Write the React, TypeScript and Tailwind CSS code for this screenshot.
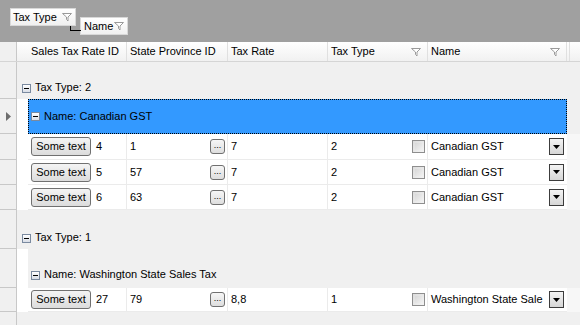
import React from "react";

const font = { fontFamily: '"Liberation Sans", Arial, sans-serif' };

function Funnel() {
  return (
    <svg width="10" height="10" viewBox="0 0 10 10" className="shrink-0">
      <path d="M0.5 1.5 H9.5 L6 5 V9 L4.5 7.5 V5 Z" fill="#fff" stroke="#9a9a9a" strokeWidth="1" />
    </svg>
  );
}

function Minus() {
  return (
    <span className="w-[9px] h-[9px] border border-[#7a8aa0] bg-gradient-to-b from-white to-[#d8dde6] flex items-center justify-center shrink-0">
      <span className="w-[5px] h-px bg-[#000]" />
    </span>
  );
}

function RowHead({ h, arrow }: { h: string; arrow?: boolean }) {
  return (
    <div className={`w-[17px] ${h} shrink-0 bg-[#f0f0f0] border-r border-b border-[#c8c8c8] flex items-center justify-center`}>
      {arrow && (
        <svg width="5" height="9" viewBox="0 0 5 9">
          <path d="M0 0 L5 4.5 L0 9 Z" fill="#6d6d6d" />
        </svg>
      )}
    </div>
  );
}

type DataRow = { id: string; prov: string; rate: string; type: string; name: string };

function SomeButton() {
  return (
    <span className="w-[60px] h-[19px] rounded-[3px] border border-[#707070] bg-gradient-to-b from-[#f4f4f4] to-[#dcdcdc] flex items-center justify-center text-[11px] text-black shrink-0">
      Some text
    </span>
  );
}

function Data({ r, h }: { r: DataRow; h: string }) {
  const cell = "h-full border-r border-[#ebebeb] flex items-center shrink-0";
  return (
    <div className={`flex ${h}`}>
      <RowHead h="h-full" />
      <div className="w-[11px] h-full bg-white shrink-0" />
      <div className="flex w-[539px] bg-white border-b border-[#ebebeb]">
        <div className={`${cell} w-[99px] pl-[3px]`}>
          <SomeButton />
          <span className="ml-[5px]">{r.id}</span>
        </div>
        <div className={`${cell} w-[101px] pl-[3px] justify-between pr-[2px]`}>
          <span>{r.prov}</span>
          <span className="w-[15px] h-[15px] rounded-[3px] border border-[#707070] bg-gradient-to-b from-[#f6f6f6] to-[#dedede] flex items-end justify-center pb-[3px] text-[9px] leading-none">
            ...
          </span>
        </div>
        <div className={`${cell} w-[100px] pl-[3px]`}>{r.rate}</div>
        <div className={`${cell} w-[100px] pl-[3px] justify-between pr-[2px]`}>
          <span>{r.type}</span>
          <span className="w-[13px] h-[13px] border border-[#8e8e8e] bg-gradient-to-br from-[#dcdcdc] to-[#f4f4f4] p-[2px]">
            <span className="block w-full h-full bg-gradient-to-br from-[#d8d8d8] to-[#f0f0f0]" />
          </span>
        </div>
        <div className={`${cell} w-[139px] pl-[3px] justify-between pr-[3px] border-r-0`}>
          <span className="whitespace-nowrap">{r.name}</span>
          <span className="w-[15px] h-[17px] border border-[#3c3c3c] bg-gradient-to-b from-[#f4f4f4] to-[#d6d6d6] flex items-center justify-center shrink-0">
            <svg width="7" height="4" viewBox="0 0 7 4">
              <path d="M0 0 H7 L3.5 4 Z" fill="#000" />
            </svg>
          </span>
        </div>
      </div>
      <div className="flex-1 h-full bg-[#f7f7f7]" />
    </div>
  );
}

const canadian: DataRow[] = [
  { id: "4", prov: "1", rate: "7", type: "2", name: "Canadian GST" },
  { id: "5", prov: "57", rate: "7", type: "2", name: "Canadian GST" },
  { id: "6", prov: "63", rate: "7", type: "2", name: "Canadian GST" },
];

export default function App() {
  const headers = [
    { t: "Sales Tax Rate ID", w: "w-[99px]" },
    { t: "State Province ID", w: "w-[101px]" },
    { t: "Tax Rate", w: "w-[100px]" },
    { t: "Tax Type", w: "w-[100px]", f: true },
    { t: "Name", w: "w-[139px]", f: true },
  ];

  return (
    <div className="w-[580px] h-[325px] overflow-hidden bg-[#f0f0f0] text-[11px] text-black" style={font}>
      {/* group panel */}
      <div className="h-[42px] bg-[#a0a0a0] flex items-start">
        <div className="ml-[10px] mt-[8px] h-[18px] w-[66px] shrink-0 bg-gradient-to-b from-white to-[#f0f0f0] border border-[#d8d8d8] flex items-center justify-between pl-[2px] pr-[3px]">
          <span className="whitespace-nowrap">Tax Type</span>
          <Funnel />
        </div>
        <div className="relative ml-[4px] mt-[17px] h-[18px] w-[48px] shrink-0 bg-gradient-to-b from-white to-[#f0f0f0] border border-[#d8d8d8] flex items-center justify-between pl-[3px] pr-[3px]">
          <span className="absolute left-[-11px] top-[8px] w-[11px] h-[5px] border-l border-b border-black" />
          <span className="whitespace-nowrap">Name</span>
          <Funnel />
        </div>
      </div>

      {/* header */}
      <div className="flex h-[20px] border-b border-[#d5d5d5] bg-gradient-to-b from-white to-[#f1f1f1]">
        <div className="w-[17px] h-full bg-[#f0f0f0] border-r border-[#c8c8c8] shrink-0" />
        <div className="w-[11px] h-full shrink-0" />
        {headers.map((h) => (
          <div key={h.t} className={`${h.w} h-full shrink-0 border-r border-[#e0e0e0] flex items-center justify-between pl-[3px] pr-[6px]`}>
            <span className="whitespace-nowrap">{h.t}</span>
            {h.f && <Funnel />}
          </div>
        ))}
        <div className="w-[3px] h-full border-r border-[#e0e0e0]" />
      </div>

      {/* Tax Type: 2 */}
      <div className="flex h-[37px]">
        <RowHead h="h-full" />
        <div className="w-[550px] flex items-end gap-[4px] pl-[5px] pb-[6px]">
          <Minus />
          <span className="leading-none">Tax Type: 2</span>
        </div>
      </div>

      {/* Name: Canadian GST (selected) */}
      <div className="flex h-[35px]">
        <RowHead h="h-full" arrow />
        <div className="w-[11px] h-full bg-white shrink-0" />
        <div className="w-[539px] h-full bg-[#3399ff] border border-dotted border-black flex items-center gap-[4px] pl-[2px] pb-[1px]">
          <Minus />
          <span>Name: Canadian GST</span>
        </div>
      </div>

      <Data r={canadian[0]} h="h-[26px]" />
      <Data r={canadian[1]} h="h-[25px]" />
      <Data r={canadian[2]} h="h-[25px]" />

      {/* Tax Type: 1 */}
      <div className="flex h-[39px]">
        <RowHead h="h-full" />
        <div className="w-[550px] flex items-end gap-[4px] pl-[5px] pb-[6px]">
          <Minus />
          <span className="leading-none">Tax Type: 1</span>
        </div>
      </div>

      {/* Name: Washington State Sales Tax */}
      <div className="flex h-[39px]">
        <RowHead h="h-full" />
        <div className="w-[11px] h-full bg-white shrink-0" />
        <div className="w-[539px] flex items-end gap-[4px] pl-[3px] pb-[8px]">
          <Minus />
          <span className="leading-none">Name: Washington State Sales Tax</span>
        </div>
      </div>

      <Data r={{ id: "27", prov: "79", rate: "8,8", type: "1", name: "Washington State Sale" }} h="h-[24px]" />

      <div className="flex h-[13px]">
        <div className="w-[17px] h-full bg-[#f0f0f0] border-r border-[#c8c8c8]" />
      </div>
    </div>
  );
}
